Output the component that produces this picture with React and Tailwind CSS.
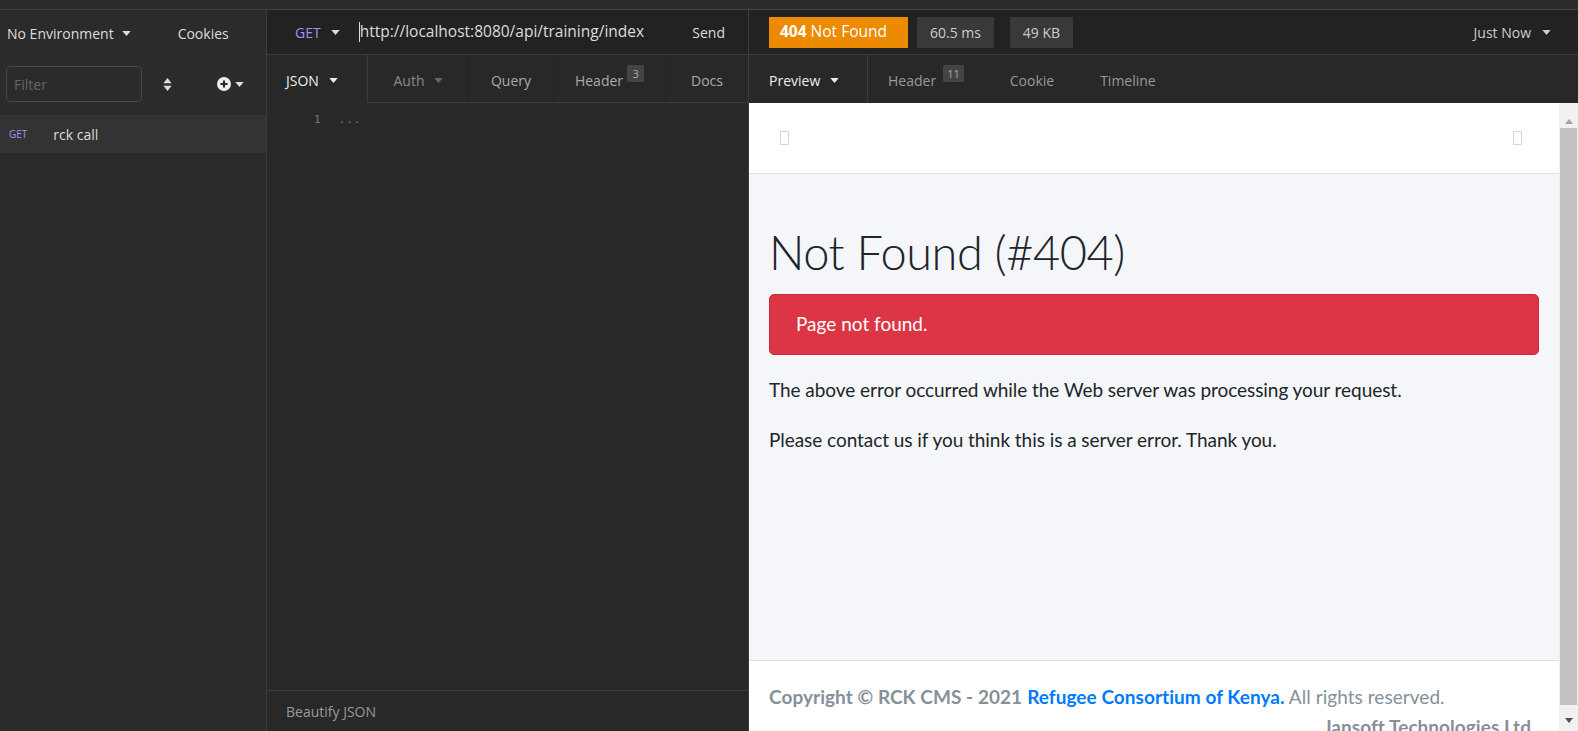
import React from 'react'

function Caret({ className = '' }) {
  return (
    <svg viewBox="0 0 10 6" className={'inline-block w-[9px] h-[5px] ' + className} fill="currentColor">
      <path d="M0 0h10L5 6z" />
    </svg>
  )
}

function Badge({ children, className = 'ml-[4px]' }) {
  return (
    <span className={'inline-flex h-[17px] min-w-[17px] -translate-y-[7px] items-center justify-center rounded-[2px] bg-[#444] px-[4px] text-[11px] leading-none text-[#aaa] ' + className}>
      {children}
    </span>
  )
}

function Sidebar() {
  return (
    <div className="flex w-[267px] shrink-0 flex-col border-r border-[#3c3c3c] bg-[#2b2b2b]">
      <div className="flex h-[46px] items-center text-[14px] text-[#ddd]">
        <span className="pl-[7px]">No Environment</span>
        <Caret className="ml-[8px] text-[#ddd]" />
        <span className="ml-[47px]">Cookies</span>
      </div>
      <div className="flex h-[59px] items-center pb-[3px]">
        <div className="ml-[6px] flex h-[36px] w-[136px] items-center rounded-[4px] border border-[#474747] px-[7px] text-[14px] text-[#666]">
          Filter
        </div>
        <svg viewBox="0 0 10 16" className="ml-[21px] h-[13px] w-[9px] text-[#ddd]" fill="currentColor">
          <path d="M0 6.5h10L5 0zM0 9.5h10L5 16z" />
        </svg>
        <svg viewBox="0 0 16 16" className="ml-[45px] h-[14px] w-[14px] text-[#eee]">
          <circle cx="8" cy="8" r="8" fill="currentColor" />
          <path d="M8 4v8M4 8h8" stroke="#2b2b2b" strokeWidth="2.4" />
        </svg>
        <Caret className="ml-[4px] text-[#ddd]" />
      </div>
      <div className="flex h-[38px] items-center bg-[#333]">
        <span className="pl-[9px] text-[10px] text-[#a393f0]">GET</span>
        <span className="ml-[26px] text-[14px] text-[#ddd]">rck call</span>
      </div>
    </div>
  )
}

function RequestPane() {
  return (
    <div className="flex w-[482px] shrink-0 flex-col border-r border-[#3c3c3c] bg-[#282828]">
      <div className="flex h-[45px] items-center border-b border-[#3c3c3c] bg-[#222] text-[14px]">
        <span className="ml-[28px] text-[#a393f0]">GET</span>
        <Caret className="ml-[10px] text-[#ddd]" />
        <span className="ml-[19px] h-[20px] w-px bg-[#ddd]" />
        <span className="text-[15.5px] text-[#ddd]">http://localhost:8080/api/training/index</span>
        <span className="ml-auto mr-[23px] text-[#ddd]">Send</span>
      </div>
      <div className="flex h-[48px] text-[14px]">
        <div className="flex w-[101px] items-center border-r border-[#3c3c3c] pl-[19px] pt-[3px] text-[#eee]">
          JSON <Caret className="ml-[10px]" />
        </div>
        <div className="flex w-[100px] items-center justify-center border-b border-[#3c3c3c] pt-[3px] text-[#888]">
          Auth <Caret className="ml-[9px] text-[#666]" />
        </div>
        <div className="flex w-[85px] items-center justify-center border-b border-l border-[#3c3c3c] border-l-[#232323] pt-[3px] text-[#aaa]">
          Query
        </div>
        <div className="flex w-[112px] items-center justify-center border-b border-l border-[#3c3c3c] border-l-[#232323] pt-[3px] text-[#aaa]">
          Header<Badge>3</Badge>
        </div>
        <div className="flex flex-1 items-center justify-center border-b border-l border-[#3c3c3c] border-l-[#232323] pt-[3px] text-[#aaa]">
          Docs
        </div>
      </div>
      <div className="flex-1 font-['DejaVu_Sans_Mono',monospace] text-[11px] text-[#777]">
        <div className="flex h-[34px] items-center">
          <span className="ml-[47px]">1</span>
          <span className="ml-[18px] tracking-[1px]">...</span>
        </div>
      </div>
      <div className="flex h-[41px] items-center border-t border-[#3c3c3c] pl-[19px] text-[14px] text-[#999]">
        Beautify JSON
      </div>
    </div>
  )
}

function Scrollbar() {
  return (
    <div className="flex w-[19px] shrink-0 flex-col items-center bg-[#f1f1f1]">
      <div className="flex h-[21px] items-end">
        <svg viewBox="0 0 8 5" className="h-[5px] w-[8px]" fill="#a3a3a3"><path d="M0 5h8L4 0z" /></svg>
      </div>
      <div className="mt-[4px] h-[577px] w-[17px] bg-[#c1c1c1]" />
      <div className="flex flex-1 items-end pb-[8px]">
        <svg viewBox="0 0 8 5" className="h-[5px] w-[8px]" fill="#505050"><path d="M0 0h8L4 5z" /></svg>
      </div>
    </div>
  )
}

function Preview() {
  return (
    <div className="flex min-h-0 flex-1 bg-white">
      <div className="flex min-w-0 flex-1 flex-col overflow-hidden font-['Lato',sans-serif]">
        <div className="flex h-[71px] shrink-0 items-center justify-between border-b border-[#dee2e6] bg-white pl-[31px] pr-[37px]">
          <span className="h-[14px] w-[9px] border border-[#d6d6d6]" />
          <span className="h-[14px] w-[9px] border border-[#d6d6d6]" />
        </div>
        <div className="h-[486px] shrink-0 bg-[#f4f6f9] px-[20px] pt-[48px] text-[#212529]">
          <h1 className="text-[47px] leading-[60px] font-light tracking-[-0.5px]">Not Found (#404)</h1>
          <div className="mt-[12px] flex h-[61px] items-center rounded-[5px] border border-[#d32535] bg-[#dc3545] pl-[26px] text-[19px] text-white">
            Page not found.
          </div>
          <p className="mt-[20px] text-[19px] leading-[30px] tracking-[-0.05px]">
            The above error occurred while the Web server was processing your request.
          </p>
          <p className="mt-[20px] text-[19px] leading-[30px] tracking-[-0.05px]">
            Please contact us if you think this is a server error. Thank you.
          </p>
        </div>
        <div className="flex-1 border-t border-[#dee2e6] bg-white px-[20px] pt-[21px] text-[19px] leading-[30px] tracking-[0.05px] text-[#869099]">
          <div>
            <b>Copyright © RCK CMS - 2021</b> <b className="text-[#007bff]">Refugee Consortium of Kenya.</b> All rights reserved.
          </div>
          <div className="pr-[8px] text-right font-bold">Jansoft Technologies Ltd</div>
        </div>
      </div>
      <Scrollbar />
    </div>
  )
}

function ResponsePane() {
  return (
    <div className="flex min-w-0 flex-1 flex-col bg-[#282828]">
      <div className="flex h-[45px] shrink-0 items-center border-b border-[#3c3c3c] bg-[#222] text-[14px]">
        <span className="ml-[20px] flex h-[31px] w-[139px] items-center bg-[#ec8a02] pl-[11px] text-[15.5px] text-white">
          <b>404</b>&nbsp;Not Found
        </span>
        <span className="ml-[9px] flex h-[31px] w-[77px] items-center justify-center bg-[#393939] text-[#ccc]">60.5 ms</span>
        <span className="ml-[16px] flex h-[31px] w-[63px] items-center justify-center bg-[#393939] text-[#ccc]">49 KB</span>
        <span className="ml-auto text-[#ccc]">Just Now</span>
        <Caret className="ml-[11px] mr-[27px] text-[#ccc]" />
      </div>
      <div className="flex h-[48px] shrink-0 text-[14px]">
        <div className="flex w-[119px] items-center border-r border-[#3c3c3c] pl-[20px] pt-[3px] text-[#eee]">
          Preview <Caret className="ml-[10px]" />
        </div>
        <div className="flex flex-1 items-center pt-[3px] text-[#999]">
          <span className="ml-[20px]">Header</span>
          <Badge className="ml-[7px]">11</Badge>
          <span className="ml-[46px]">Cookie</span>
          <span className="ml-[46px]">Timeline</span>
        </div>
      </div>
      <Preview />
    </div>
  )
}

export default function App() {
  return (
    <div className="flex h-[731px] w-[1578px] flex-col overflow-hidden bg-[#2b2b2b] font-['Open_Sans',sans-serif]">
      <div className="h-[10px] shrink-0 border-b border-[#444] bg-[#2b2b2b]" />
      <div className="flex min-h-0 flex-1">
        <Sidebar />
        <RequestPane />
        <ResponsePane />
      </div>
    </div>
  )
}
